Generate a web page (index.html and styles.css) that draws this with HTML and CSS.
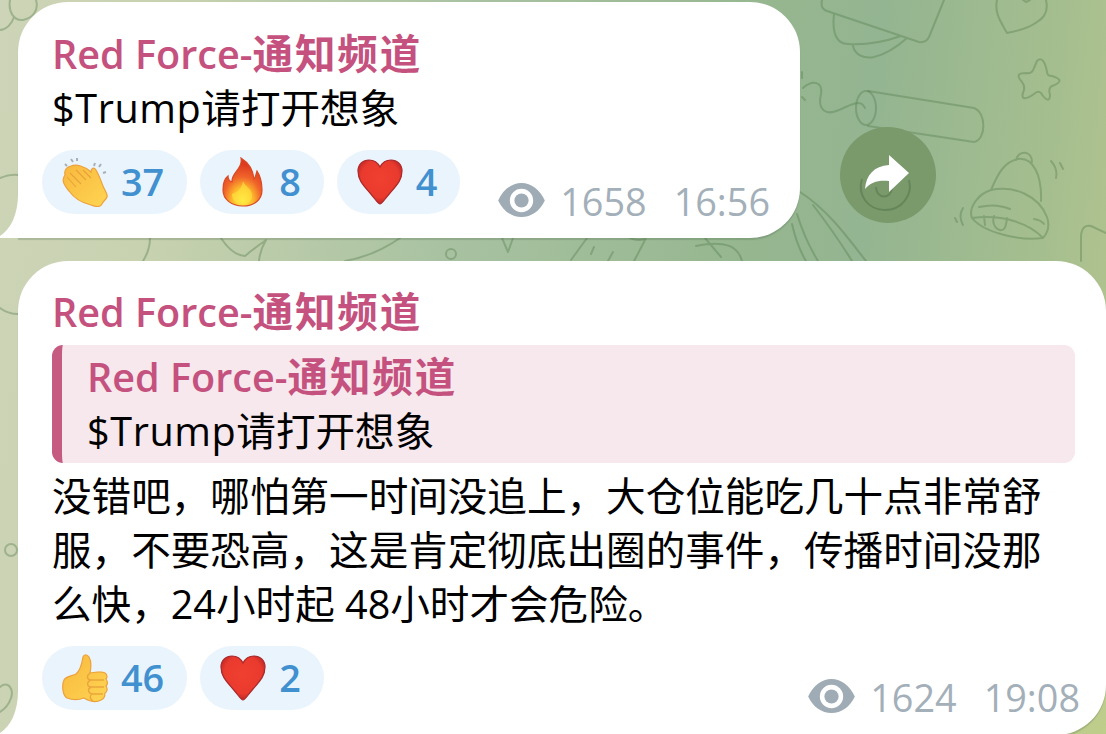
FILE: index.html
```html
<!DOCTYPE html>
<html lang="zh-CN">
<head>
    <meta charset="UTF-8">
    <meta name="viewport" content="width=device-width, initial-scale=1.0">
    <title>Red Force-通知频道</title>
    <link rel="stylesheet" href="styles.css">
</head>
<body>

    <!-- shared symbols -->
    <svg class="defs" width="0" height="0">
        <defs>
            <radialGradient id="fireFill" cx="50%" cy="88%" r="75%">
                <stop offset="0" stop-color="#fff04a"/>
                <stop offset=".35" stop-color="#fdb92c"/>
                <stop offset=".65" stop-color="#f0642a"/>
                <stop offset="1" stop-color="#dd3a20"/>
            </radialGradient>
            <radialGradient id="heartFill" cx="50%" cy="42%" r="60%">
                <stop offset="0" stop-color="#f04030"/>
                <stop offset=".72" stop-color="#e93a2e"/>
                <stop offset="1" stop-color="#b82324"/>
            </radialGradient>
            <linearGradient id="handFill" x1="0" y1="0" x2="1" y2="1">
                <stop offset="0" stop-color="#f8b83e"/>
                <stop offset="1" stop-color="#ffd552"/>
            </linearGradient>
            <symbol id="heart" viewBox="0 0 46 50">
                <path d="M23 47C21 47 19 43 13 36C6 28 1 23 1 14C1 7 6 3 12 3C18 3 21 6 23 10C25 6 28 3 34 3C40 3 45 7 45 14C45 23 40 28 33 36C27 43 25 47 23 47Z" fill="url(#heartFill)" stroke="#a82a2c" stroke-width="1.2"/>
            </symbol>
            <symbol id="eye" viewBox="0 0 48 36">
                <path fill-rule="evenodd" d="M0 18C5 7 14 0 24 0S43 7 48 18C43 29 34 35 24 35S5 29 0 18ZM24 6A12 12 0 1 0 24 30A12 12 0 1 0 24 6Z" fill="#9facb6"/>
                <circle cx="24" cy="18" r="7.3" fill="#9facb6"/>
            </symbol>
        </defs>
    </svg>

    <div class="chat">
        <svg class="doodles" viewBox="0 0 1106 734">
            <path d="M0 30C6 30 12 24 14 17M10 0C8 12 14 21 23 20C33 18 39 10 36 0M0 178Q10 174 18 175M0 308Q8 314 18 314M0 687C8 680 14 689 11 698Q8 707 0 712"/>
            <circle cx="11" cy="550" r="6"/>
            <path d="M150 238Q150 250 143 261M221 238Q232 255 245 256Q252 250 266 240Q260 250 259 261M400 238Q374 256 345 261"/>
            <circle cx="451" cy="254" r="5"/>
            <path d="M502 238L508 252L513 238M587 238L571 260M594 247L591 254M613 252L608 261M630 238Q640 242 646 238M646 238Q640 250 634 261M705 238L721 257M696 246C725 240 738 246 742 261"/>
            <path d="M822 0Q820 9 827 11L919 42Q926 43 929 37L944 0M834 14C832 32 836 44 848 44C866 45 884 42 901 36M853 46C855 55 864 59 874 57C887 54 898 46 907 38"/>
            <path d="M997 0C994 13 1001 22 1007 33C1018 31 1029 28 1037 22C1047 16 1048 8 1046 0M1023 0L1026 2L1030 0"/>
            <path d="M1037 61C1041 57 1045 60 1047 72Q1047 76 1052 76C1062 79 1062 82 1052 86Q1048 88 1050 95C1050 102 1046 101 1041 93Q1038 90 1034 94C1024 101 1020 99 1024 90Q1025 86 1022 82C1016 75 1018 73 1027 73Q1032 74 1034 68Z"/>
            <path d="M802 72L802 78M802 97L805 100M803 88C813 79 823 82 821 94C817 110 826 116 839 110C850 105 860 100 863 105L865 108M868 91L974 108C987 113 986 140 974 142L868 126"/>
            <ellipse cx="866" cy="108" rx="10" ry="17"/>
            <path d="M800 192C828 210 848 238 866 261M813 205Q836 235 852 261M797 214Q805 240 818 261M792 224Q797 246 806 261"/>
            <path d="M991 190C999 171 1005 162 1018 159C1033 157 1042 175 1041 201M1016 160C1019 149 1032 151 1032 162M991 190C1014 185 1039 196 1047 217Q1051 229 1043 238C1020 241 984 233 972 218C968 208 978 194 991 190M972 218C1004 214 1030 224 1043 238M979 207Q996 203 1010 209M984 216L985 225M994 216C991 225 998 233 1004 229Q1006 227 1007 218M1034 219Q1041 220 1044 224M1051 161Q1058 169 1056 178M1060 163L1063 169M963 208Q958 216 963 225M955 218L957 222"/>
            <path d="M1081 261V236Q1082 224 1091 226L1106 233"/>
        </svg>

        <div class="row">
            <div class="bubble bubble-first">
                <svg class="tail" viewBox="0 0 30 50"><path d="M18 6C18 26 11 41 0 48V50H30V0H18Z" fill="#fff"/></svg>
                <div class="name">Red Force-<span class="cjk">通知频道</span></div>
                <div class="text"><span class="ticker">$Trump</span>请打开想象</div>
                <div class="footer">
                    <div class="reactions">
                        <div class="reaction">
                            <svg class="emoji" viewBox="0 0 46 50">
                                <path d="M3 18C2 13 5 10 9 9C14 7 23 9 29 15C29 11 32 10 34 13C37 18 39 24 41 29C43 34 46 37 45 40C44 43 41 44 40 47C38 51 34 50 29 48C20 46 12 41 7 34C2 28-1 23 3 18Z" fill="url(#handFill)" stroke="#eca13c" stroke-width="1.2"/>
                                <path d="M5 20L14 30M8 16L19 27M14 13L24 23M21 13L29 21" fill="none" stroke="#e9a23a" stroke-width="1.1"/>
                                <path d="M3 7L5 9M9 2L11 5M15 1L15 4M33 6L32 9M39 7L37 10M44 15L41 16" fill="none" stroke="#a9b0b5" stroke-width="2"/>
                            </svg>
                            <span>37</span>
                        </div>
                        <div class="reaction">
                            <svg class="emoji" viewBox="0 0 46 50">
                                <path d="M21 1C29 6 33 12 34 22C36 20 36 17 37 14C41 20 42 26 42 33C42 43 34 49 23 49C11 49 3 42 3 33C3 27 4 22 8 19C8 22 9 24 12 25C11 16 23 12 21 1Z" fill="url(#fireFill)" stroke="#d84a25" stroke-width="1.2"/>
                                <path d="M23 24C25 30 32 31 32 39C32 44 28 47 23 47C16 47 12 43 12 37C17 36 22 31 23 24Z" fill="#ffe63f" opacity=".6"/>
                            </svg>
                            <span>8</span>
                        </div>
                        <div class="reaction">
                            <svg class="emoji"><use href="#heart"/></svg>
                            <span>4</span>
                        </div>
                    </div>
                    <div class="meta">
                        <svg class="eye"><use href="#eye"/></svg>
                        <span class="views">1658</span>
                        <span>16:56</span>
                    </div>
                </div>
            </div>
            <div class="share">
                <svg viewBox="0 0 96 96">
                    <path d="M22 52C17 68 28 83 45 83C62 83 73 68 69 53M36 60C36 72 51 73 52 61" fill="none" stroke="#658659" stroke-width="2"/>
                    <path d="M49 28L69 46L49 65V54C38 53 31 55 25 62C26 48 34 39 49 38Z" fill="#fff"/>
                </svg>
            </div>
        </div>

        <div class="bubble bubble-second">
            <svg class="tail" viewBox="0 0 30 50"><path d="M18 6C18 26 11 41 0 48V50H30V0H18Z" fill="#fff"/></svg>
            <div class="name">Red Force-<span class="cjk">通知频道</span></div>
            <div class="quote">
                <div class="name">Red Force-<span class="cjk">通知频道</span></div>
                <div class="text"><span class="ticker">$Trump</span>请打开想象</div>
            </div>
            <div class="text">没错吧，哪怕第一时间没追上，大仓位能吃几十点非常舒<br>服，不要恐高，这是肯定彻底出圈的事件，传播时间没那<br>么快，24小时起 48小时才会危险。</div>
            <div class="footer">
                <div class="reactions">
                    <div class="reaction">
                        <svg class="emoji" viewBox="0 0 46 50">
                            <path d="M21 4C22 1 25 1 27 4C30 9 29 15 28 20C34 19 40 18 43 20C46 22 45 25 44 26C46 29 46 31 44 33C46 36 45 39 43 40C43 43 42 46 39 47C34 50 27 48 22 45C17 47 10 47 5 45C0 42 0 31 2 27C4 23 10 23 14 21C19 17 20 10 21 4Z" fill="url(#handFill)" stroke="#eca13c" stroke-width="1.2"/>
                            <path d="M28 20C24 23 25 27 29 27H42M29 27C24 29 25 34 29 34H42M29 34C25 36 26 40 30 41H41M30 41C27 43 28 46 31 48" fill="none" stroke="#eaa63c" stroke-width="1.4"/>
                        </svg>
                        <span>46</span>
                    </div>
                    <div class="reaction">
                        <svg class="emoji"><use href="#heart"/></svg>
                        <span>2</span>
                    </div>
                </div>
                <div class="meta">
                    <svg class="eye"><use href="#eye"/></svg>
                    <span class="views">1624</span>
                    <span>19:08</span>
                </div>
            </div>
        </div>
    </div>

</body>
</html>
```

FILE: styles.css
```css
* {
    box-sizing: border-box;
}

body {
    margin: 0;
    font-family: "Open Sans", "Noto Sans CJK SC", sans-serif;
    font-size: 39.6px;
    line-height: 54px;
    color: #000;
    overflow: hidden;
}

svg {
    display: block;
}

.defs {
    position: absolute;
}

/* wallpaper */
.chat {
    position: relative;
    height: 734px;
    padding: 2px 0 0 18px;
    overflow: hidden;
    background:
        linear-gradient(155deg, rgba(184, 200, 140, 0) 72%, rgba(196, 209, 138, 0.7) 100%),
        linear-gradient(96deg, #cdd4b7 0%, #c8d2b0 14%, #a8c2a1 40%, #95b68f 66%, #94b591 75%, #a5be8f 90%, #b5c58e 100%);
}

.doodles {
    position: absolute;
    left: 0;
    top: 0;
    width: 1106px;
    height: 734px;
    fill: none;
    stroke: #557c4c;
    stroke-opacity: 0.38;
    stroke-width: 2;
    stroke-linecap: round;
    stroke-linejoin: round;
}

.row {
    display: flex;
    align-items: flex-end;
    gap: 40px;
    margin-bottom: 23px;
}

/* messages */
.bubble {
    position: relative;
    padding: 25px 31px 0 34px;
    background: #fff;
    border-radius: 50px 50px 50px 0;
    box-shadow: 0 2px 1px rgba(70, 100, 70, 0.25);
}

.bubble-first {
    width: 782px;
    height: 236px;
}

.bubble-second {
    height: 474px;
    padding-top: 24px;
}

.tail {
    position: absolute;
    left: -18px;
    bottom: 0;
    width: 30px;
    height: 50px;
}

.name {
    font-weight: 600;
    color: #c4517e;
    white-space: nowrap;
}

.cjk {
    font-size: 40.6px;
    line-height: 1;
    letter-spacing: 1.8px;
}

.text {
    white-space: nowrap;
}

.ticker {
    letter-spacing: 0.6px;
}

.quote {
    margin: 6px 0 6px;
    padding: 5px 0 5px 25px;
    border-left: 10px solid #c65b82;
    border-radius: 11px;
    background: #f6e8ed;
}

.footer {
    display: flex;
    justify-content: space-between;
    align-items: flex-end;
    margin: 15px 0 0 -10px;
}

.reactions {
    display: flex;
    gap: 13px;
}

.reaction {
    display: flex;
    align-items: center;
    gap: 13px;
    height: 64px;
    padding: 0 23px 0 20px;
    border-radius: 32px;
    background: #eaf4fd;
    color: #4190cf;
    font-size: 37.8px;
    font-weight: 600;
}

.emoji {
    width: 46px;
    height: 50px;
}

.meta {
    display: flex;
    align-items: center;
    margin: 0 -1px -13px 0;
    font-size: 37.8px;
    line-height: 50px;
    color: #a3afb9;
}

.bubble-second .meta {
    margin-right: -5px;
}

.eye {
    width: 47px;
    height: 35px;
    margin: 0 15px 3px 0;
}

.views {
    margin-right: 27px;
}

/* forward button */
.share {
    width: 96px;
    height: 96px;
    margin-bottom: 15px;
    border-radius: 50%;
    background: #7a9a6c;
    position: relative;
}
```
